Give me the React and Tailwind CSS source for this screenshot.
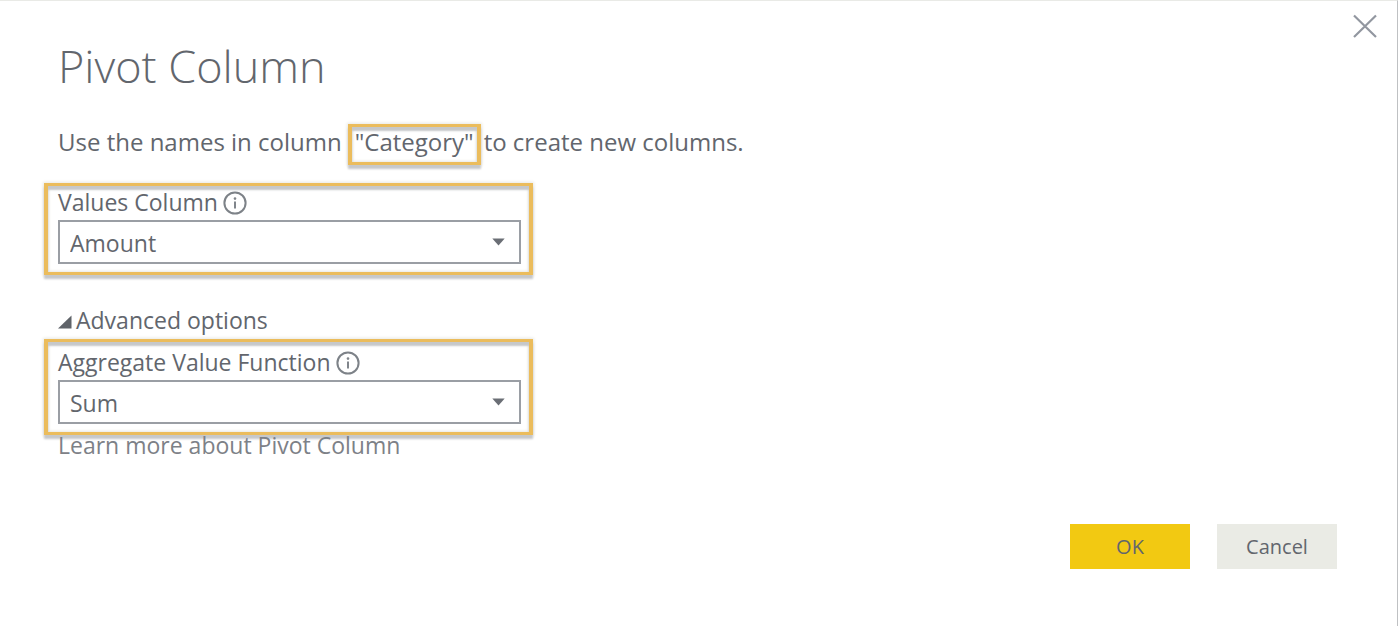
import { useState } from "react";

function InfoIcon() {
  return (
    <svg viewBox="0 0 24 24" className="mt-0.5 size-6 shrink-0" fill="none" aria-hidden="true">
      <circle cx="12" cy="12" r="10.6" stroke="#7d8288" strokeWidth="2" />
      <path d="M12 10.5v7" stroke="#80858b" strokeWidth="2" />
      <circle cx="12" cy="7.6" r="1.3" fill="#80858b" />
    </svg>
  );
}

function Field({ id, label, options }) {
  const [value, setValue] = useState(options[0]);
  return (
    <div>
      <div className="flex h-8 items-center gap-[5px]">
        <label htmlFor={id} className="text-[23px] leading-8">
          {label}
        </label>
        <InfoIcon />
      </div>
      <div className="relative mt-0.5">
        <select
          id={id}
          value={value}
          onChange={(e) => setValue(e.target.value)}
          className="block h-11 w-full appearance-none border-2 border-[#9a9ea4] bg-white pl-2.5 pr-10 pt-0.5 text-[23px] leading-8 outline-none"
        >
          {options.map((o) => (
            <option key={o}>{o}</option>
          ))}
        </select>
        <svg
          viewBox="0 0 13 8"
          className="pointer-events-none absolute right-4 top-[18px] h-2 w-[13px]"
          aria-hidden="true"
        >
          <path d="M0.3 0.6h12.4L6.5 7.4z" fill="#6a6e75" />
        </svg>
      </div>
    </div>
  );
}

function Highlight({ children }) {
  return (
    <div className="-ml-3.5 -mr-3 border-x-4 border-y-[3px] border-[#ebbc5c] pb-2 pl-2.5 pr-2 shadow-[0_4px_2px_#c6c8ca,0_0_3px_1px_#e8e8e2,inset_0_4px_2px_#c6c8ca,inset_0_0_3px_1px_#e8e8e2]">
      {children}
    </div>
  );
}

export default function App() {
  const [open, setOpen] = useState(true);
  return (
    <div
      role="dialog"
      aria-labelledby="title"
      className="relative flex min-h-screen flex-col border-r border-t border-r-[#bfc1c3] border-t-[#e9eae6] bg-white pb-[57px] pl-[58px] pr-[60px] pt-[35px] font-['Open_Sans','Noto_Sans',sans-serif] text-[#62666d]"
    >
      <button type="button" aria-label="Close" className="absolute right-5 top-[13px]">
        <svg viewBox="0 0 24 24" className="size-6" aria-hidden="true">
          <path d="M1 1.5l22 21.5M23 1.5L1 23" stroke="#9297a0" strokeWidth="2.2" />
        </svg>
      </button>

      <h1 id="title" className="text-[45px] font-light leading-[60px]">
        Pivot Column
      </h1>

      <p className="mt-7 flex items-start text-2xl leading-9">
        <span>Use the names in column</span>
        <span className="ml-1.5 h-[41px] border-x-4 border-y-[3px] border-[#ebbc5c] px-[3px] leading-[30px] shadow-[0_4px_2px_#c6c8ca,0_0_3px_1px_#e8e8e2,inset_0_4px_2px_#c6c8ca,inset_0_0_3px_1px_#e8e8e2]">
          &quot;Category&quot;
        </span>
        <span className="ml-[3px]">to create new columns.</span>
      </p>

      <div className="mt-[18px] w-[463px]">
        <Highlight>
          <Field id="values" label="Values Column" options={["Amount"]} />
        </Highlight>

        <button
          type="button"
          aria-expanded={open}
          onClick={() => setOpen(!open)}
          className="mt-[29px] flex items-center gap-1 text-[23px] leading-8"
        >
          <svg viewBox="0 0 14 14" className="mt-1 size-3.5" aria-hidden="true">
            <path d="M13.5 0.5v13H0z" fill="#5f6369" />
          </svg>
          Advanced options
        </button>

        {open && (
          <div className="mt-[3px]">
            <Highlight>
              <div className="pt-1">
                <Field id="aggregate" label="Aggregate Value Function" options={["Sum"]} />
              </div>
            </Highlight>
          </div>
        )}

        <a href="#learn" className="block text-[23px] leading-5 text-[#7d8187]">
          Learn more about Pivot Column
        </a>
      </div>

      <div className="mt-auto flex justify-end gap-[27px] text-xl">
        <button type="button" className="h-[45px] w-[120px] bg-[#f2c912]">
          OK
        </button>
        <button type="button" className="h-[45px] w-[120px] bg-[#eaebe5]">
          Cancel
        </button>
      </div>
    </div>
  );
}
